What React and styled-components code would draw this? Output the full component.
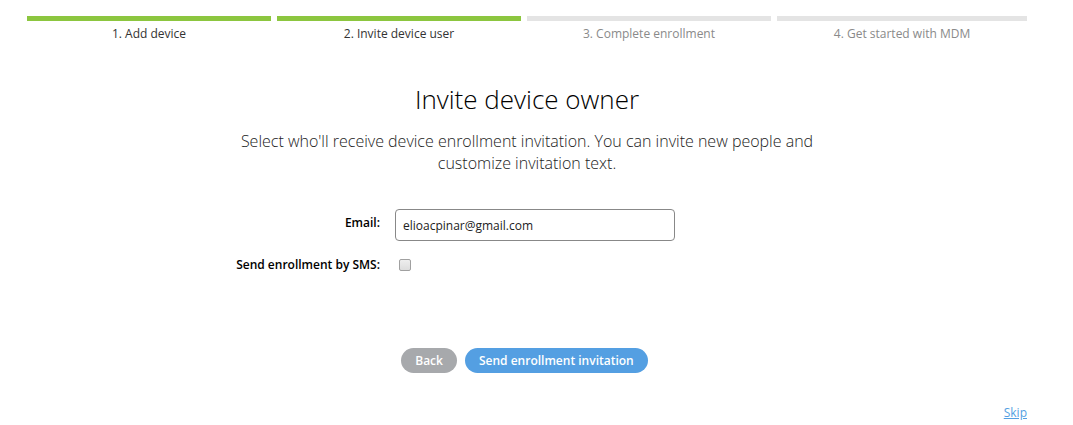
import React, { useState } from "react";
import styled, { createGlobalStyle } from "styled-components";

const GlobalStyle = createGlobalStyle`
  *, *::before, *::after { box-sizing: border-box; }
  body {
    margin: 0;
    background: #fff;
    color: #222;
    font: 12px/16px "Open Sans", sans-serif;
  }
`;

const Page = styled.div`
  padding: 16px 46px 0 27px;
`;

const Steps = styled.ol`
  display: grid;
  grid-template-columns: repeat(4, 1fr);
  list-style: none;
  margin: 0;
  padding: 0;
`;

const Step = styled.li`
  margin-right: 6px;
  border-top: 5px solid ${(p) => (p.$done ? "#8cc63f" : "#e4e4e4")};
  color: ${(p) => (p.$done ? "#333" : "#8a8a8a")};
  padding-top: 5px;
  text-align: center;
  &:last-child { margin-right: 0; }
`;

const Title = styled.h1`
  margin: 37px 0 0;
  color: #000;
  font-size: 26px;
  line-height: 40px;
  font-weight: 300;
  text-align: center;
`;

const Intro = styled.p`
  max-width: 600px;
  margin: 11px auto 0;
  font-size: 16px;
  line-height: 22px;
  font-weight: 300;
  text-align: center;
`;

const Form = styled.form`
  display: flex;
  flex-direction: column;
`;

const Fields = styled.div`
  display: grid;
  grid-template-columns: 353px 280px;
  column-gap: 15px;
  row-gap: 10px;
  margin-top: 35px;
`;

const Label = styled.label`
  color: #000;
  font-weight: 600;
  text-align: right;
  padding-top: 6px;
`;

const TextInput = styled.input`
  width: 100%;
  height: 32px;
  padding: 0 7px;
  border: 1px solid #888;
  border-radius: 4px;
  background: #fff;
  color: #222;
  font: inherit;
`;

const Checkbox = styled.input`
  appearance: none;
  width: 12px;
  height: 12px;
  margin: 8px 4px;
  border: 1px solid #a0a0a0;
  border-radius: 2px;
  background: linear-gradient(#eee, #ddd);
  &:checked { background: #549fe2; }
`;

const Actions = styled.div`
  display: flex;
  justify-content: center;
  gap: 8px;
  margin-top: 69px;
  padding-right: 5px;
`;

const Button = styled.button`
  height: 25px;
  padding: 0 14px;
  border: 0;
  border-radius: 13px;
  background: ${(p) => (p.$primary ? "#549fe2" : "#a7a9ac")};
  color: #fff;
  font: inherit;
  font-weight: 600;
  cursor: pointer;
`;

const Footer = styled.footer`
  margin-top: 32px;
  text-align: right;
`;

const SkipLink = styled.a`
  color: #549fe2;
`;

const steps = [
  { label: "1. Add device", done: true },
  { label: "2. Invite device user", done: true },
  { label: "3. Complete enrollment", done: false },
  { label: "4. Get started with MDM", done: false },
];

export default function App() {
  const [email, setEmail] = useState("elioacpinar@gmail.com");
  return (
    <Page>
      <GlobalStyle />
      <Steps>
        {steps.map((s) => (
          <Step key={s.label} $done={s.done}>{s.label}</Step>
        ))}
      </Steps>
      <main>
        <Title>Invite device owner</Title>
        <Intro>
          Select who'll receive device enrollment invitation. You can invite new
          people and customize invitation text.
        </Intro>
        <Form onSubmit={(e) => e.preventDefault()}>
          <Fields>
            <Label htmlFor="email">Email:</Label>
            <TextInput id="email" type="email" value={email} onChange={(e) => setEmail(e.target.value)} />
            <Label htmlFor="sms">Send enrollment by SMS:</Label>
            <Checkbox id="sms" type="checkbox" />
          </Fields>
          <Actions>
            <Button type="button">Back</Button>
            <Button type="submit" $primary>Send enrollment invitation</Button>
          </Actions>
        </Form>
      </main>
      <Footer>
        <SkipLink href="#skip">Skip</SkipLink>
      </Footer>
    </Page>
  );
}
